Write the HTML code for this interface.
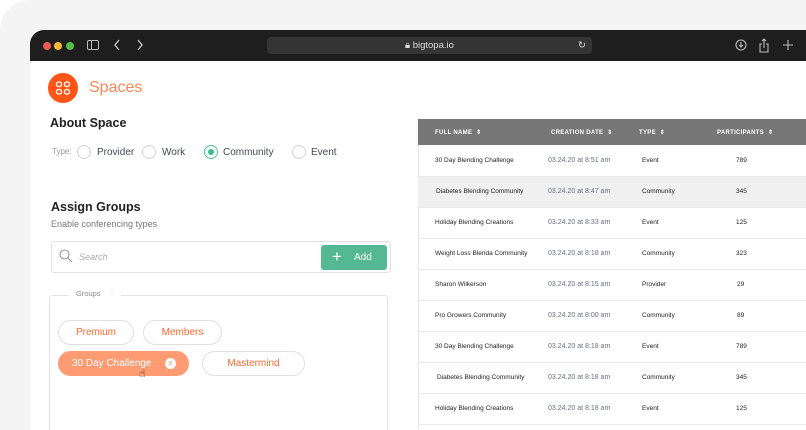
<!DOCTYPE html>
<html><head><meta charset="utf-8"><style>
*{margin:0;padding:0;box-sizing:border-box}
html,body{width:806px;height:430px;overflow:hidden}
body{background:#fff;font-family:"Liberation Sans",sans-serif;position:relative}
.bg{position:absolute;left:0;top:0;width:806px;height:430px;background:#f4f4f4;border-top-left-radius:30px}
.win{position:absolute;left:30px;top:30px;width:776px;height:400px;background:#fff;border-top-left-radius:14px;overflow:hidden}
.bar{height:31px;background:#1e1e1e;position:relative}
.dot{position:absolute;top:12px;width:8px;height:8px;border-radius:50%}
.url{position:absolute;left:237px;top:7px;width:325px;height:17px;background:#343434;border-radius:4px;color:#ddd;font-size:9.5px;line-height:17px}
.a{position:absolute;white-space:nowrap}
.radio{position:absolute;width:14px;height:14px;border:1px solid #d5d5d8;border-radius:50%}
.rl{position:absolute;font-size:10px;color:#44485a}
.chip{position:absolute;height:25px;border:1px solid #e0e0e0;border-radius:13px;color:#ff6a30;font-size:10px;text-align:center;line-height:23px}
table{border-collapse:collapse;position:absolute;left:418px;top:119px;width:388px;table-layout:fixed;font-size:6.5px;color:#222}
th{background:#777;color:#fff;height:26px;font-size:6px;text-align:left;font-weight:bold;letter-spacing:.3px;white-space:nowrap}
td{height:31px;border-bottom:1px solid #eaeaea;white-space:nowrap}
td:nth-child(2){color:#6a6f86;font-size:7px}
td:nth-child(3){padding-left:3px}
td:nth-child(4){padding-left:27px}
</style></head><body>
<div class="bg"></div>
<div class="win">
 <div class="bar">
  <div class="dot" style="left:13px;background:#ee5a52"></div>
  <div class="dot" style="left:24px;background:#f4b73a"></div>
  <div class="dot" style="left:36px;background:#52c042"></div>
  <svg style="position:absolute;left:57px;top:10px" width="12" height="10"><rect x=".5" y=".5" width="11" height="9" rx="1.5" fill="none" stroke="#bbb"/><line x1="4.5" y1="1" x2="4.5" y2="9" stroke="#bbb"/></svg>
  <svg style="position:absolute;left:84px;top:9px" width="30" height="12" fill="none" stroke="#ccc" stroke-width="1.3"><path d="M5 1L1 6l4 5M24 1l4 5-4 5"/></svg>
  <div class="url"><span style="position:absolute;left:138px">🔒︎ bigtopa.io</span><span style="position:absolute;right:6px">↻</span></div>
  <svg style="position:absolute;left:704px;top:8px" width="70" height="16" fill="none" stroke="#bbb" stroke-width="1.1"><circle cx="7" cy="7" r="5"/><path d="M7 4v5M5 7l2 2 2-2"/><path d="M28 6h-2v8h8V6h-2M30 10V1M28 3l2-2 2 2"/><path d="M49 7h10M54 2v10"/></svg>
 </div>
</div>
<div class="a" style="left:48px;top:73px;width:30px;height:30px;border-radius:50%;background:#ff5416"></div>
<svg class="a" style="left:55px;top:80px" width="16" height="16" fill="none" stroke="#fff" stroke-width="1.3"><rect x="1.5" y="2" width="5" height="4.5" rx="2"/><rect x="9.5" y="2" width="5" height="4.5" rx="2"/><rect x="1.5" y="9.5" width="5" height="4.5" rx="2"/><rect x="9.5" y="9.5" width="5" height="4.5" rx="2"/></svg>
<div class="a" style="left:89px;top:79px;font-size:16px;color:#ff8656">Spaces</div>
<div class="a" style="left:50px;top:116px;font-size:12.5px;font-weight:bold;color:#222">About Space</div>
<div class="a" style="left:52px;top:147px;font-size:8px;color:#999">Type:</div>
<div class="radio" style="left:77px;top:145px"></div><div class="rl" style="left:97px;top:147px">Provider</div>
<div class="radio" style="left:142px;top:145px"></div><div class="rl" style="left:162px;top:147px">Work</div>
<div class="radio" style="left:204px;top:145px;border-color:#4fc69a"><div style="position:absolute;left:3px;top:3px;width:6px;height:6px;border-radius:50%;background:#3dbb8c"></div></div><div class="rl" style="left:223px;top:147px">Community</div>
<div class="radio" style="left:292px;top:145px"></div><div class="rl" style="left:311px;top:147px">Event</div>
<div class="a" style="left:51px;top:200px;font-size:12.5px;font-weight:bold;color:#222">Assign Groups</div>
<div class="a" style="left:51px;top:219px;font-size:9px;color:#777">Enable conferencing types</div>
<div class="a" style="left:51px;top:241px;width:340px;height:32px;border:1px solid #e2e2e2;border-radius:3px"></div>
<svg class="a" style="left:59px;top:249px" width="14" height="14" fill="none" stroke="#999" stroke-width="1.1"><circle cx="5.5" cy="5.5" r="4.5"/><path d="M9 9l4 4"/></svg>
<div class="a" style="left:79px;top:252px;font-size:9px;font-style:italic;color:#aaa">Search</div>
<div class="a" style="left:321px;top:245px;width:66px;height:25px;background:#54b992;border-radius:3px;color:#fff;font-size:10px;line-height:25px"><span style="position:absolute;left:11px;font-size:17px;top:-1px">+</span><span style="position:absolute;left:33px">Add</span></div>
<div class="a" style="left:49px;top:295px;width:339px;height:150px;border:1px solid #e2e2e2;border-radius:3px"></div>
<div class="a" style="left:68px;top:289px;padding:0 8px;background:#fff;font-size:7.5px;color:#888">Groups <span style="color:#4fc69a;margin-left:8px">·</span></div>
<div class="chip" style="left:58px;top:320px;width:76px">Premium</div>
<div class="chip" style="left:143px;top:320px;width:79px">Members</div>
<div class="chip" style="left:58px;top:351px;width:131px;background:#ff9b73;border-color:#ff9b73;color:#fff;text-align:left;padding-left:13px">30 Day Challenge<span style="position:absolute;left:106px;top:6px;width:11px;height:11px;border-radius:50%;background:#fff;color:#ff9b73;font-size:9px;line-height:11px;text-align:center">×</span></div>
<div class="chip" style="left:202px;top:351px;width:103px">Mastermind</div>
<div class="a" style="left:139px;top:367px;font-size:11px;color:#333">☝︎</div>
<div class="a" style="left:418px;top:145px;width:1px;height:290px;background:#e6e6e6"></div>
<table>
<colgroup><col style="width:130px"><col style="width:91px"><col style="width:70px"><col></colgroup>
<tr><th style="padding-left:17px">FULL NAME &nbsp;⇕</th><th style="padding-left:3px">CREATION DATE &nbsp;⇕</th><th style="padding-left:0">TYPE &nbsp;⇕</th><th style="padding-left:8px">PARTICIPANTS &nbsp;⇕</th></tr>
<tr><td style="padding-left:17px">30 Day Blending Challenge</td><td>03.24.20 at 8:51 am</td><td>Event</td><td>789</td></tr>
<tr style="background:#f0f0f0"><td style="padding-left:18px">Diabetes Blending Community</td><td>03.24.20 at 8:47 am</td><td>Community</td><td>345</td></tr>
<tr><td style="padding-left:17px">Holiday Blending Creations</td><td>03.24.20 at 8:33 am</td><td>Event</td><td>125</td></tr>
<tr><td style="padding-left:17px">Weight Loss Blenda Community</td><td>03.24.20 at 8:18 am</td><td>Community</td><td>323</td></tr>
<tr><td style="padding-left:17px">Sharon Wilkerson</td><td>03.24.20 at 8:15 am</td><td>Provider</td><td style="padding-left:28px">29</td></tr>
<tr><td style="padding-left:17px">Pro Growers Community</td><td>03.24.20 at 8:00 am</td><td>Community</td><td style="padding-left:28px">89</td></tr>
<tr><td style="padding-left:17px">30 Day Blending Challenge</td><td>03.24.20 at 8:18 am</td><td>Event</td><td>789</td></tr>
<tr><td style="padding-left:19px">Diabetes Blending Community</td><td>03.24.20 at 8:18 am</td><td>Community</td><td>345</td></tr>
<tr><td style="padding-left:17px">Holiday Blending Creations</td><td>03.24.20 at 8:18 am</td><td>Event</td><td>125</td></tr>
</table>
</body></html>
